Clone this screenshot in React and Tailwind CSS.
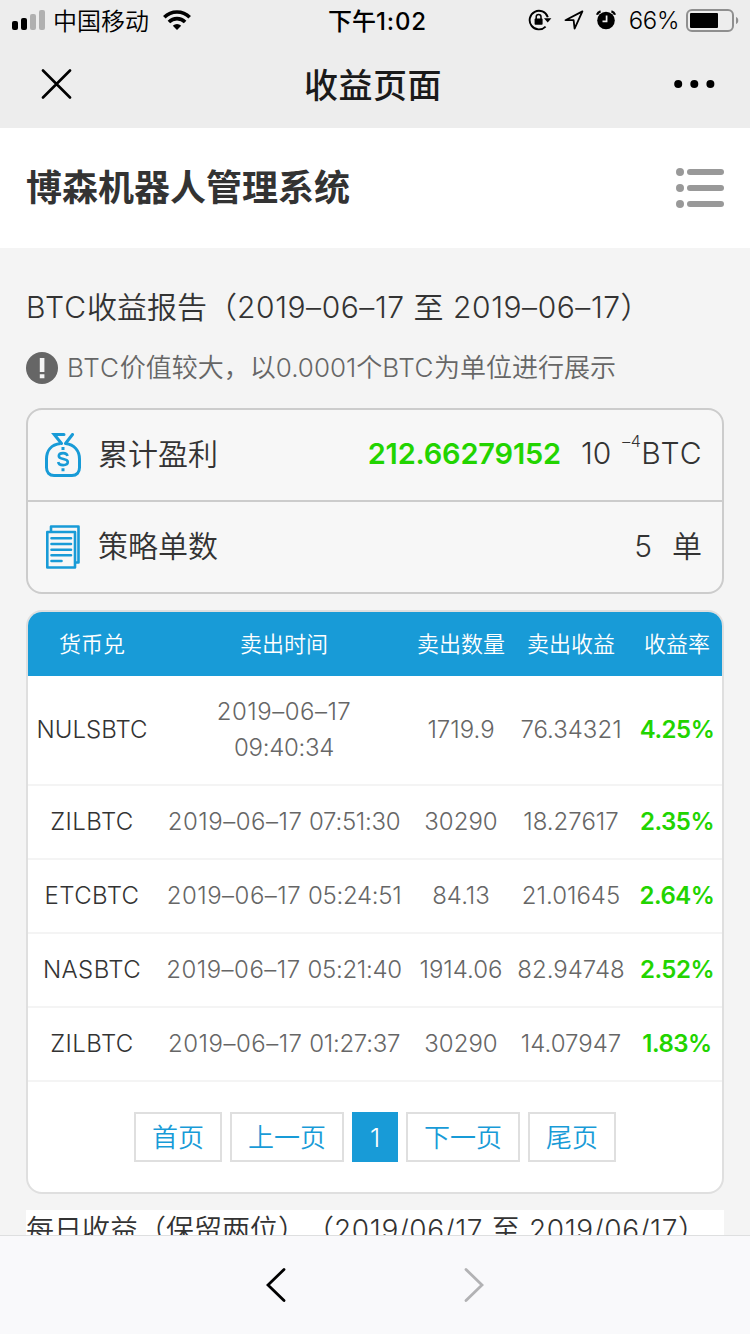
import clsx from 'clsx'

const orders = [
  { pair: 'NULSBTC', date: '2019–06–17', time: '09:40:34', amount: '1719.9', profit: '76.34321', rate: '4.25%', wrap: true },
  { pair: 'ZILBTC', date: '2019–06–17', time: '07:51:30', amount: '30290', profit: '18.27617', rate: '2.35%' },
  { pair: 'ETCBTC', date: '2019–06–17', time: '05:24:51', amount: '84.13', profit: '21.01645', rate: '2.64%' },
  { pair: 'NASBTC', date: '2019–06–17', time: '05:21:40', amount: '1914.06', profit: '82.94748', rate: '2.52%' },
  { pair: 'ZILBTC', date: '2019–06–17', time: '01:27:37', amount: '30290', profit: '14.07947', rate: '1.83%' },
]

const pages = [
  { label: '首页', width: 'w-[88px]' },
  { label: '上一页', width: 'w-[114px]' },
  { label: '1', width: 'w-[46px]', active: true },
  { label: '下一页', width: 'w-[114px]' },
  { label: '尾页', width: 'w-[88px]' },
]

function StatusBar() {
  return (
    <div className="flex h-10 items-center justify-between pl-3 pr-[11px] text-2xl text-black">
      <div className="flex w-[300px] items-center">
        <svg width="33" height="20" viewBox="0 0 33 20">
          <rect x="0" y="11" width="6" height="9" rx="2" />
          <rect x="9" y="8" width="6" height="12" rx="2" />
          <rect x="18" y="4" width="6" height="16" rx="2" fill="#b0b0b0" />
          <rect x="27" y="0" width="6" height="20" rx="2" fill="#b0b0b0" />
        </svg>
        <span className="ml-2 pt-1 leading-9 font-[350]">中国移动</span>
        <svg className="ml-[14px]" width="28" height="20" viewBox="0 0 28 20" fill="none" stroke="#000" strokeWidth="3.6">
          <path d="M1.3 7.3a18 18 0 0 1 25.4 0" />
          <path d="M5.9 12a11.5 11.5 0 0 1 16.2 0" />
          <path d="M14 20l-4.2-4.3a6 6 0 0 1 8.4 0z" fill="#000" stroke="none" />
        </svg>
      </div>
      <span className="ml-1 pt-1 leading-9 font-[550] tracking-[0.9px]"><span className="font-medium tracking-normal">下午</span>1:02</span>
      <div className="flex w-[300px] items-center justify-end">
        <svg width="24" height="22" viewBox="0 0 24 22" fill="none" stroke="#000" strokeWidth="1.9">
          <path d="M19.8 8.2A9.3 9.3 0 1 0 17.6 17.6" />
          <path d="M16 9.2h7.4L19.7 13.6z" fill="#000" stroke="none" />
          <rect x="6.6" y="9.6" width="8" height="6.2" rx="0.8" fill="#000" stroke="none" />
          <path d="M8.2 10V7.8a2.4 2.4 0 0 1 4.8 0V10" strokeWidth="1.5" />
        </svg>
        <svg className="ml-[12px]" width="20" height="20" viewBox="0 0 20 20" fill="none" stroke="#000" strokeWidth="1.8" strokeLinejoin="round">
          <path d="M18.4 1.4L1.4 10.2h8.2L10.6 18.6z" />
        </svg>
        <svg className="ml-[12px]" width="20" height="20" viewBox="0 0 20 20">
          <circle cx="10" cy="10.5" r="8.8" />
          <path d="M1 4.8A5 5 0 0 1 4.6 1.4M19 4.8A5 5 0 0 0 15.4 1.4" fill="none" stroke="#000" strokeWidth="2.2" />
          <path d="M10.6 5.4v6H6.5" fill="none" stroke="#ededed" strokeWidth="1.7" />
        </svg>
        <span className="ml-[13px] pt-0.5 leading-9 tracking-[-0.4px] font-[350]">66%</span>
        <svg className="ml-[7px]" width="53" height="23" viewBox="0 0 53 23">
          <rect x="1" y="1" width="46" height="21" rx="5" fill="none" stroke="#8f8f8f" strokeWidth="2" />
          <rect x="4" y="4" width="28" height="15" rx="1" />
          <path d="M50 8c3 .8 3 6.2 0 7z" fill="#8f8f8f" />
        </svg>
      </div>
    </div>
  )
}

function NavBar() {
  return (
    <div className="flex h-22 items-center justify-between pl-[41px] pr-[35px]">
      <svg width="31" height="30" viewBox="0 0 31 30" stroke="#000" strokeWidth="2.6" strokeLinecap="round">
        <path d="M2 1.5l27 27M29 1.5l-27 27" />
      </svg>
      <h1 className="pt-0.5 text-[34px] font-medium tracking-[0.5px] text-[#1a1a1a]">收益页面</h1>
      <svg width="41" height="8" viewBox="0 0 41 8">
        <circle cx="4.2" cy="4" r="4" />
        <circle cx="20.3" cy="4" r="4" />
        <circle cx="36.4" cy="4" r="4" />
      </svg>
    </div>
  )
}

function MoneyBagIcon() {
  return (
    <svg width="36" height="44" viewBox="0 0 36 44" fill="none" stroke="#189bd7" strokeWidth="3">
      <path d="M15.5 10.5C6 11.5 1.5 18 1.5 26v8.5c0 5 3 8 7.500 8h18c4.500 0 7.500-3 7.500-8V26c0-8-5-14.500-14-15.500" />
      <path d="M19 1.500H9.200l7.300 9M27.500 1.500l-7 9" strokeLinecap="round" />
      <path d="M22.500 23c-.4-1.900-2-2.900-4.400-2.900-2.600 0-4.300 1.100-4.300 3 0 4.200 9 1.800 9 5.900 0 2.100-1.900 3.100-4.600 3.100s-4.700-1.100-5-3.100" strokeWidth="2.600" />
      <path d="M18 14v3M18 35.300v3" />
    </svg>
  )
}

function OrdersIcon() {
  return (
    <svg width="36" height="44" viewBox="0 0 36 44" fill="none" stroke="#189bd7" strokeWidth="2.6" strokeLinejoin="round">
      <path d="M6 6V1.500h27.500v36H30" />
      <path d="M2.300 7H30v35.500H2.300z" />
      <path d="M6.500 13.300h19.500M6.500 19h19.500M6.500 24.700h19.500M6.500 30.300h19.500M6.500 36h10" strokeLinecap="round" />
    </svg>
  )
}

function Summary() {
  return (
    <div className="rounded-2xl border-2 border-[#cccccc] bg-[#f7f7f7] text-[30px] text-[#333333]">
      <div className="flex h-[92px] items-center border-b-2 border-[#cccccc] pl-[17px] pr-5">
        <MoneyBagIcon />
        <span className="ml-[17px] pb-0.5">累计盈利</span>
        <span className="ml-auto pb-0.5 text-[29px] font-[580] tracking-[-0.2px] text-[#22d400]">212.66279152</span>
        <span className="ml-5 pb-[3px] text-[30px]">10</span>
        <sup className="-top-3.5 ml-[11px] text-base tracking-[0.5px]">–4</sup>
        <span className="-mr-px pb-[3px] text-[30px] tracking-[1.3px]">BTC</span>
      </div>
      <div className="flex h-[90px] items-center pl-[17px] pr-5">
        <OrdersIcon />
        <span className="ml-[17px] pb-0.5">策略单数</span>
        <span className="ml-auto pb-0.5">5</span>
        <span className="ml-5 pb-0.5">单</span>
      </div>
    </div>
  )
}

function OrderTable() {
  return (
    <div className="mt-4 h-[584px] overflow-hidden rounded-2xl border-2 border-[#dfdfdf] bg-white">
      <table className="w-[694px] table-fixed border-collapse text-center text-2xl text-[#666666]">
        <colgroup>
          <col className="w-[128px]" />
          <col className="w-[256px]" />
          <col className="w-[98px]" />
          <col className="w-[122px]" />
          <col className="w-[90px]" />
        </colgroup>
        <thead>
          <tr className="h-16 bg-[#189bd7] text-[22px] text-white">
            <th className="pt-0.5 font-[350]">货币兑</th>
            <th className="pt-0.5 font-[350]">卖出时间</th>
            <th className="pt-0.5 font-[350]">卖出数量</th>
            <th className="pt-0.5 font-[350]">卖出收益</th>
            <th className="pt-0.5 font-[350]">收益率</th>
          </tr>
        </thead>
        <tbody>
          {orders.map((o) => (
            <tr
              key={o.time}
              className={clsx('whitespace-nowrap leading-9 shadow-[inset_0_-2px_0_#f4f4f4]', o.wrap ? 'h-[110px]' : 'h-[74px]')}
            >
              <td className={clsx('pb-0.5 text-[#333333]', !o.wrap && 'tracking-[0.4px]')}>{o.pair}</td>
              <td className="pb-0.5">
                <span className="tracking-[0.5px]">{o.date}</span>
                {o.wrap ? <br /> : ' '}
                <span className="tracking-[-0.3px]">{o.time}</span>
              </td>
              <td className="pb-0.5">{o.amount}</td>
              <td className="pb-0.5">{o.profit}</td>
              <td className="pb-0.5 font-[580] tracking-[-0.5px] text-[#22d400]">{o.rate}</td>
            </tr>
          ))}
        </tbody>
      </table>
      <div className="mt-[30px] flex justify-center gap-2 text-[26px]">
        {pages.map((p) => (
          <button
            key={p.label}
            className={clsx('flex h-[50px] items-center justify-center', p.width, p.active ? 'bg-[#189bd7] text-white' : 'border-2 border-[#dfdfdf] text-[#189bd7]')}
          >
            {p.label}
          </button>
        ))}
      </div>
    </div>
  )
}

export default function App() {
  return (
    <div className="flex h-[1334px] w-[750px] flex-col overflow-hidden bg-[#f4f4f4] font-['Inter','Noto_Sans_CJK_SC',sans-serif] [text-spacing-trim:space-all]">
      <div className="h-32 shrink-0 bg-[#ededed]">
        <StatusBar />
        <NavBar />
      </div>

      <header className="flex h-[120px] shrink-0 items-center justify-between bg-white px-[26px]">
        <h2 className="text-4xl font-semibold text-[#333333]">博森机器人管理系统</h2>
        <svg width="48" height="40" viewBox="0 0 48 40" fill="#999">
          {[4, 20, 36].map((y) => (
            <g key={y}>
              <circle cx="4" cy={y} r="4" />
              <rect x="11" y={y - 3} width="37" height="6" rx="3" />
            </g>
          ))}
        </svg>
      </header>

      <main className="min-h-0 flex-1 overflow-hidden px-[26px] font-[350]">
        <h3 className="mt-9 whitespace-nowrap text-[30px] leading-[46px] text-[#333333]">
          <span className="tracking-[1.1px]">BTC</span>收益报告（<span className="tracking-[0.55px]">2019–06–17 至 2019–06–17</span>）
        </h3>
        <div className="mt-[18px] mb-5 flex h-10 items-center text-[26px] text-[#666666]">
          <svg className="mr-[9px] shrink-0" width="32" height="32" viewBox="0 0 32 32">
            <circle cx="16" cy="16" r="16" fill="#666" />
            <path d="M13.800 6h4.600v14h-4.600zM13.800 22.300h4.600v4h-4.600z" fill="#f4f4f4" />
          </svg>
          <p className="whitespace-nowrap pb-0.5">
            <span className="tracking-[0.9px]">BTC</span>价值较大，以0.0001个<span className="tracking-[0.5px]">BTC</span>为单位进行展示
          </p>
        </div>
        <Summary />
        <OrderTable />
        <div className="mt-4 h-20 whitespace-nowrap bg-white text-[28px] leading-10 text-[#333333]">
          每日收益（保留两位）（<span className="tracking-[0.65px]">2019/06/17 至 2019/06/17</span>）
        </div>
      </main>

      <footer className="flex h-[99px] shrink-0 items-center justify-center gap-[178px] border-t border-[#dedfe0] bg-[#f9f9fb]">
        <svg width="20" height="34" viewBox="0 0 20 34" fill="none" stroke="#000" strokeWidth="2.8" strokeLinecap="round">
          <path d="M18 1.500L2 17l16 15.500" />
        </svg>
        <svg width="20" height="34" viewBox="0 0 20 34" fill="none" stroke="#b2b2b4" strokeWidth="2.8" strokeLinecap="round">
          <path d="M2 1.500L18 17 2 32.500" />
        </svg>
      </footer>
    </div>
  )
}
